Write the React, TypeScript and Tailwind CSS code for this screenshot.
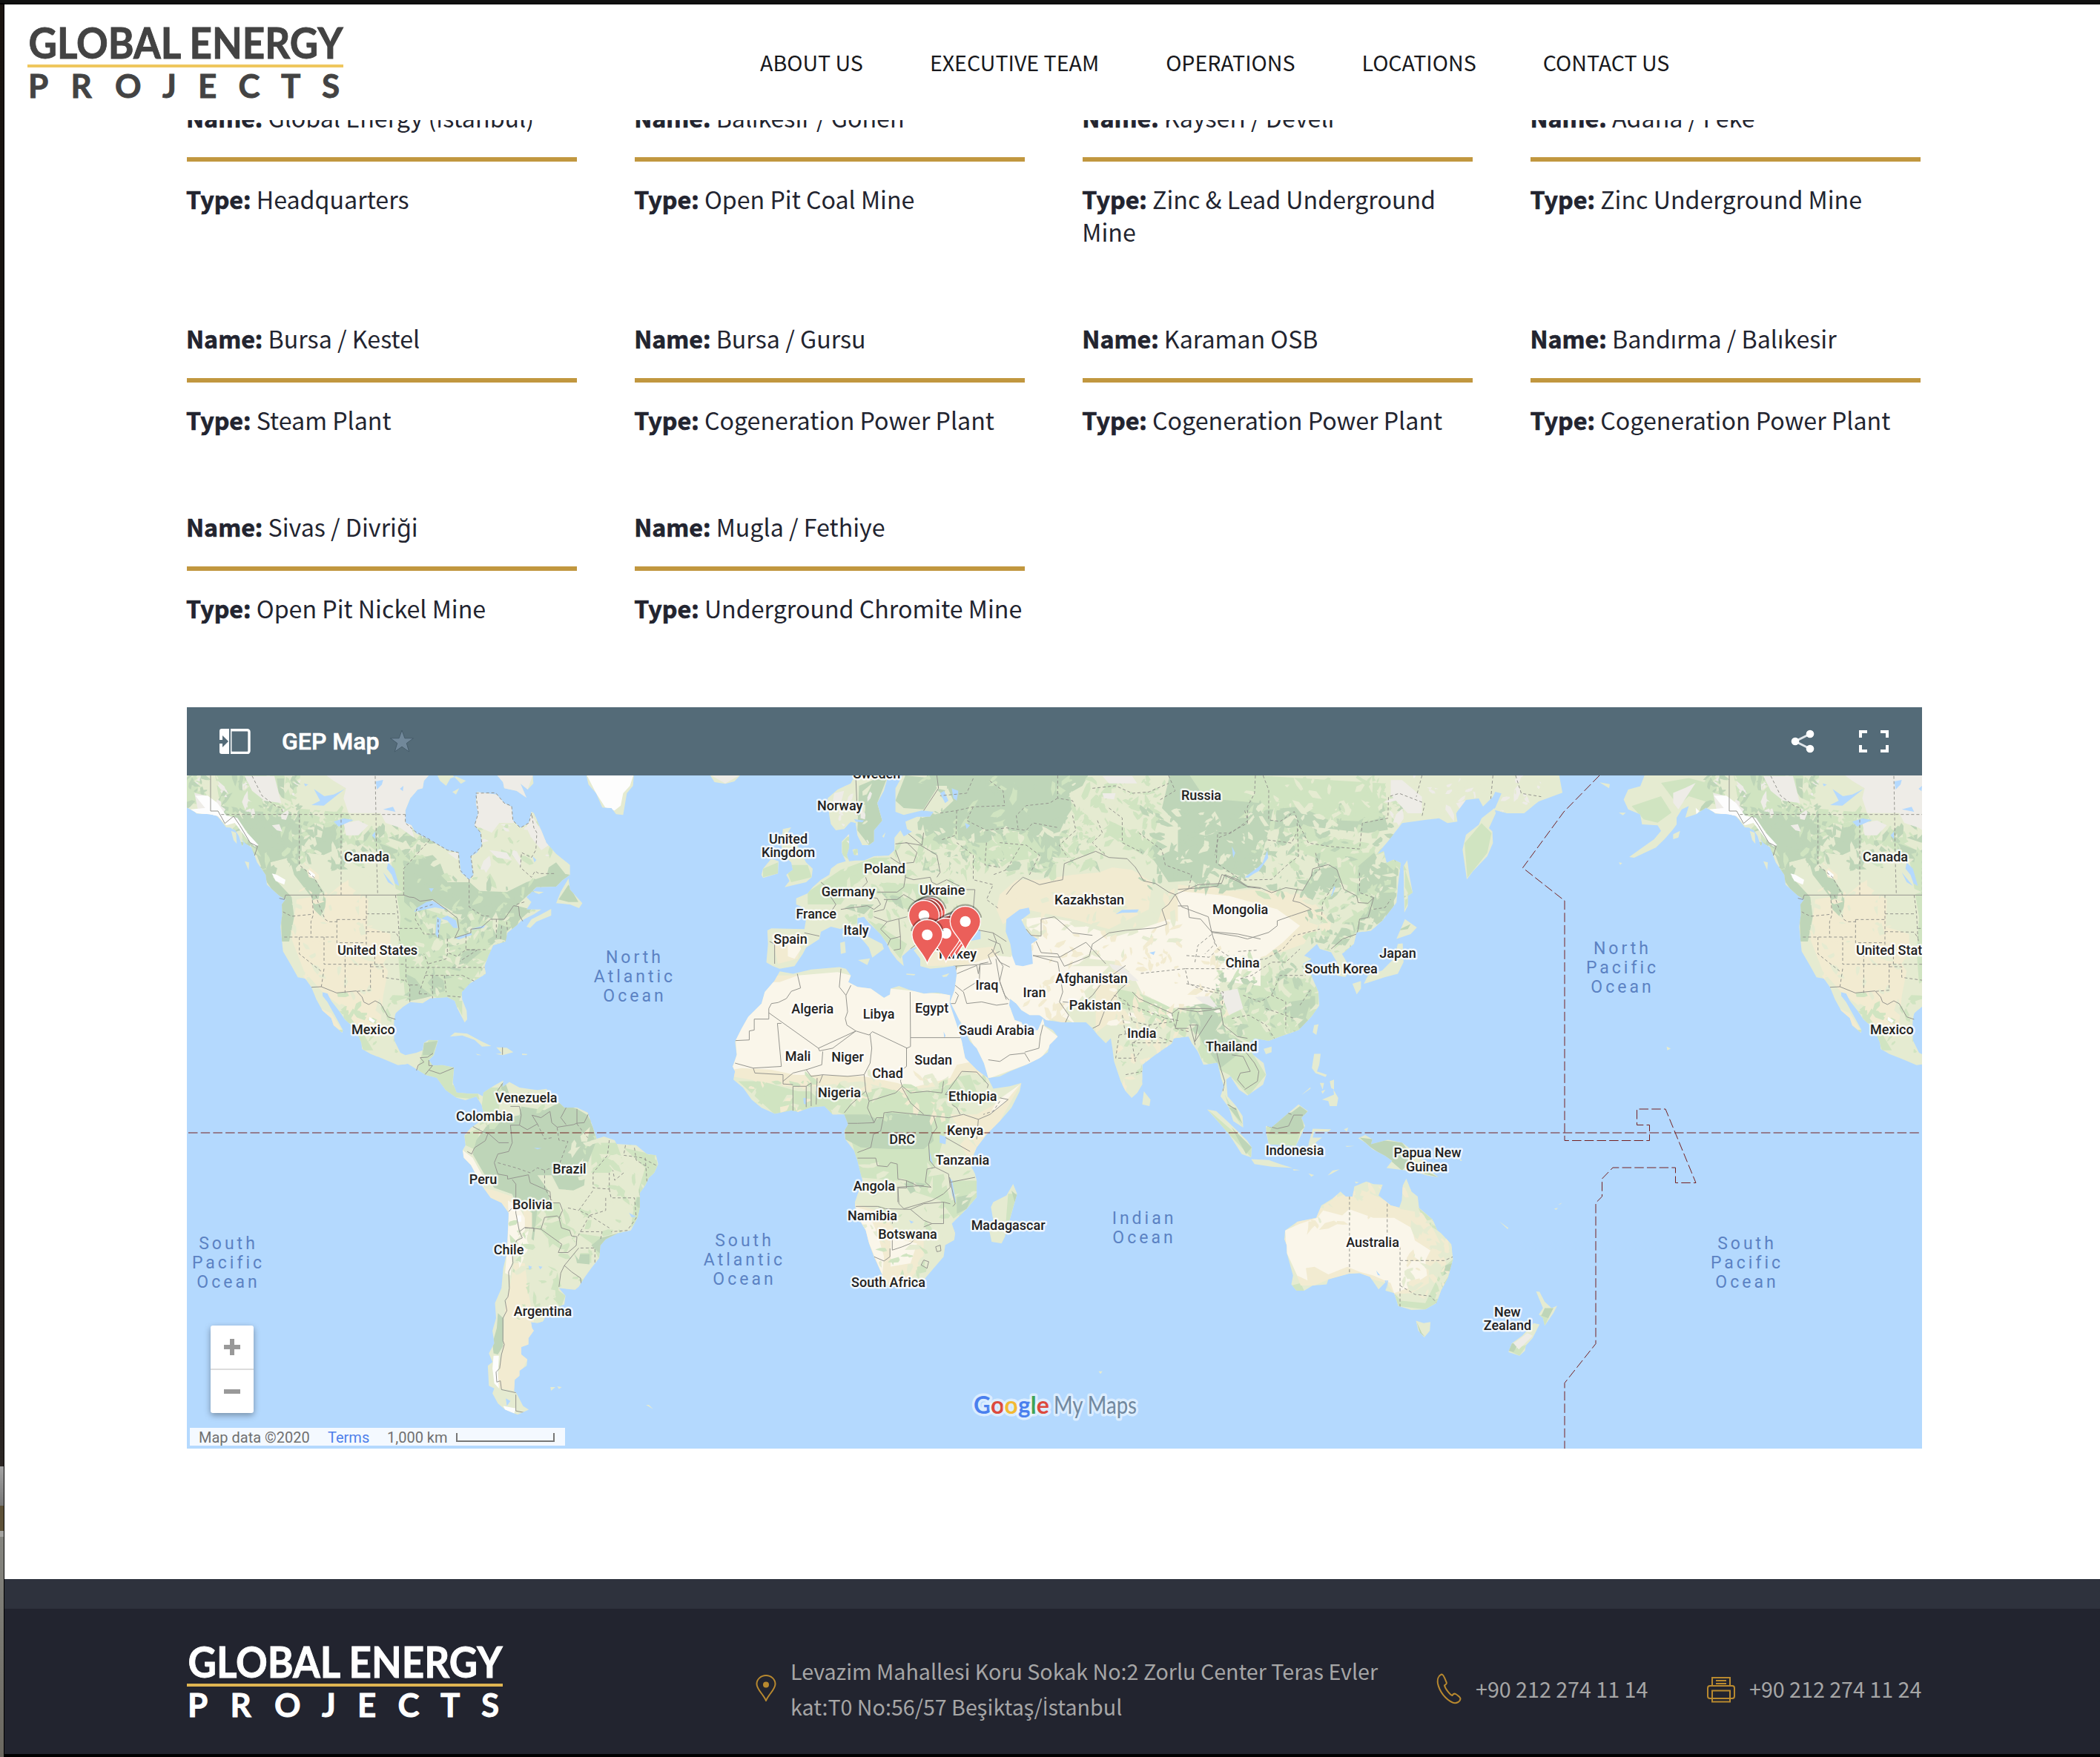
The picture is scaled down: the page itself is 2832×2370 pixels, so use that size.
import React from 'react';

const SANS = "font-['Noto_Sans_CJK_SC','Noto_Sans',sans-serif]";

/* ------------------------------------------------------------------ */
/* Map geometry. Each sheet has its own drawing scale.                 */
/* ------------------------------------------------------------------ */

type Sheet = 'na' | 'alaska' | 'sa' | 'eu' | 'atl' | 'afr' | 'asia' | 'aus';
type Shape = [Sheet, string];

const SHEETS: Record<Sheet, string> = {
  na: 'translate(250 950) scale(0.33333)',
  alaska: 'translate(52 940) scale(0.46685 0.44643)',
  sa: 'translate(240 1440) scale(0.48473 0.33807)',
  eu: 'translate(1000 1040) scale(0.44643 0.33333)',
  atl: 'translate(750 1030) scale(0.41459 0.33333)',
  afr: 'translate(960 1280) scale(0.44643)',
  asia: 'translate(1600 1030) scale(0.3827 0.44643)',
  aus: 'translate(1600 1440) scale(0.46685 0.33807)',
};

const C = {
  water: '#b4d9fe',
  land: '#e5ebd1',
  mid: '#d0e4c1',
  dark: '#bed5b8',
  tan: '#f2ebd1',
  cream: '#faf6ea',
  ice: '#eeece7',
  white: '#fdfdfd',
  line: '#95958f',
};

const AMERICA_LAND: Shape[] = [
  ['na', 'M-50 270L-50 400L6 405L45 442L100 445L130 452L165 498L195 500L215 530L240 560L268 580L290 640L325 690L330 730L380 775L405 790L390 810L392 850L385 900L395 1000L430 1060L455 1105L485 1110L510 1145L530 1195L555 1240L590 1270L600 1300L635 1330L637 1318L600 1250L575 1205L555 1180L555 1165L575 1170L590 1200L625 1245L645 1275L690 1315L712 1370L715 1395L750 1415L800 1435L860 1460L900 1455L940 1480L973 1500L1017 1511L1053 1561L1097 1592L1133 1602L1177 1587L1199 1622L1210 1590L1184 1576L1148 1576L1097 1571L1082 1531L1087 1470L1040 1460L1000 1462L985 1440L1005 1420L1022 1360L985 1358L965 1370L960 1400L935 1410L890 1420L870 1410L845 1360L843 1310L845 1275L850 1250L880 1225L910 1205L960 1210L990 1190L1060 1185L1090 1200L1100 1230L1130 1288L1140 1275L1138 1240L1120 1195L1118 1165L1150 1130L1200 1100L1215 1090L1210 1060L1225 1020L1245 975L1295 960L1303 925L1340 895L1360 875L1410 850L1440 830L1380 830L1400 800L1380 780L1420 740L1500 738L1525 712L1556 690L1556 650L1500 605L1460 560L1440 510L1410 440L1400 435L1390 480L1355 500L1325 470L1320 415L1290 400L1260 365L1180 355L1175 400L1185 440L1170 490L1195 520L1200 570L1180 600L1155 615L1165 690L1148 710L1115 680L1105 600L1060 590L990 550L930 520L915 490L890 480L890 430L910 380L940 345L960 340L965 310L1000 270Z'],
  ['na', 'M1500 805L1518 760L1550 705L1556 750L1606 805L1593 825L1556 810ZM1255 280L1405 280L1408 320L1385 345L1355 320L1380 378L1340 350L1290 340L1285 315ZM1020 288L1030 310L1055 330L1072 300L1095 292L1135 310L1115 322L1080 285ZM1080 355L1108 340L1095 365ZM1380 900L1400 870L1440 850L1480 828L1480 855L1420 880L1395 905ZM1400 755L1450 760L1430 768ZM1070 1345L1090 1328L1140 1333L1200 1365L1238 1383L1200 1385L1170 1358L1120 1340ZM1255 1415L1280 1412L1258 1388L1300 1390L1327 1408L1285 1420ZM1175 1414L1198 1420L1182 1420ZM1362 1414L1384 1415L1380 1420L1362 1419ZM240 635L258 640L256 672ZM185 512L205 520L208 565L195 550ZM212 520L235 560L230 575Z'],
  ['alaska', 'M255 230L240 270L205 280L192 310L205 340L240 355L245 385L290 388L300 405L280 430L240 460L208 484L222 486L285 455L310 430L335 400L345 385L345 365L360 340L380 330L370 365L400 355L430 335L455 350L510 355L560 400L620 400L620 230ZM335 415L355 405L350 425L335 430ZM122 258L152 264L150 276ZM178 350L198 350L190 358ZM178 500L188 502L182 508Z'],
  ['alaska', 'M316 1056L328 1063L318 1068Z'],
];

const AMERICA_ZONES: [string, Shape[]][] = [
  [C.mid, [
    ['na', 'M150 288L400 288L440 420L660 440L680 480L620 540L800 560L880 600L1000 620L1060 720L900 800L880 930L960 1080L870 1130L860 1000L870 860L830 620L700 560L560 560L420 470L280 470L200 420L150 340Z'],
    ['na', 'M880 800L1100 870L1290 880L1290 950L1200 1060L1110 1190L1100 1230L1000 1180L890 1200L880 1080L960 1060L870 920ZM1090 1200L1120 1200L1120 1260ZM640 1230L700 1300L760 1400L720 1400L690 1310L640 1270ZM940 1480L960 1400L985 1358L1022 1360L1005 1420L985 1440L1087 1470L1080 1540L1184 1576L1190 1600L1090 1590Z'],
    ['alaska', 'M300 260L380 245L470 270L510 340L440 320L380 300L350 330ZM510 237L600 237L600 400L550 350L520 300ZM215 330L300 300L330 350L290 380L250 370Z'],
  ]],
  [C.dark, [
    ['na', 'M110 440L150 410L230 430L400 440L460 400L470 520L600 470L625 580L560 610L480 600L470 650L520 700L560 760L572 810L545 860L520 840L510 780L440 690L420 620L345 640L355 700L430 780L440 860L420 960L390 960L385 800L330 720L285 600L240 540L200 460Z'],
    ['na', 'M885 640L1000 610L1030 640L1060 720L1150 720L1190 755L1300 760L1380 720L1500 680L1556 690L1500 738L1420 740L1340 815L1400 830L1300 920L1300 960L1250 970L1240 865L1150 850L1100 850L1000 790L940 850L885 800Z'],
    ['na', 'M880 1180L910 1160L890 1090L930 1110L960 1150L1000 1180L960 1190L910 1200ZM970 1110L1040 1090L1050 1160L1000 1175ZM1070 1070L1130 1010L1160 990L1200 1000L1150 1040L1110 1080ZM370 300L400 300L400 400L380 380ZM965 1370L1020 1362L1000 1420L960 1420ZM780 560L860 590L850 640L790 620ZM1470 660L1500 640L1540 690L1460 700ZM940 500L880 560L820 540Z'],
    ['na', 'M1510 790L1550 730L1590 800L1550 800Z'],
  ]],
  [C.land, [
    ['na', 'M345 640L390 630L430 680L430 740L380 720L350 690ZM470 570L495 580L490 620L470 600ZM540 630L630 610L640 740L570 770L540 690ZM620 640L880 760L850 770L640 770ZM230 300L260 330L240 350L220 330ZM490 470L560 490L550 540L500 530ZM960 880L1010 890L1010 940L970 930ZM1050 950L1110 950L1090 1000L1050 1010Z'],
  ]],
  [C.tan, [
    ['na', 'M450 790L510 780L520 830L560 870L570 780L640 720L740 790L735 900L830 930L830 1000L800 1050L820 1080L800 1180L790 1290L770 1350L700 1310L640 1230L560 1170L480 1080L430 950ZM545 1230L590 1250L637 1325L600 1300ZM480 640L540 690L540 710L500 700ZM630 730L660 710L660 740L640 760Z'],
  ]],
  [C.ice, [
    ['na', 'M560 280L1000 280L960 340L910 380L890 430L915 490L925 540L870 500L810 480L790 440L660 440L640 380L650 340L600 310ZM640 480L700 470L740 490L700 530L650 530ZM1180 355L1260 365L1290 400L1320 415L1330 480L1270 480L1240 520L1195 500L1170 490ZM1395 440L1440 510L1470 570L1440 590L1400 540L1380 500ZM1230 590L1300 600L1320 630L1260 620ZM1255 280L1408 280L1385 345L1380 378L1290 340ZM1060 600L1105 600L1100 630ZM240 290L360 290L388 400L320 390L270 350ZM350 490L380 485L392 515L370 510Z'],
    ['alaska', 'M335 290L370 275L400 260L350 340L335 320ZM450 290L490 300L540 340L520 370L460 340Z'],
  ]],
  [C.white, [
    ['na', 'M40 370L90 370L130 400L165 450L210 460L250 520L296 570L280 575L250 545L200 480L165 490L130 450L45 440L20 425L80 420ZM350 685L370 690L405 710L400 730L365 715ZM745 1265L768 1280L760 1290L742 1278ZM500 670L525 690L520 705L500 690Z'],
    ['alaska', 'M450 340L500 335L520 360L460 352ZM400 335L410 345L402 357Z'],
  ]],
  [C.water, [
    ['na', 'M935 825L975 800L1000 795L1062 832L1010 822L960 832L925 840ZM1018 860L1035 870L1022 945L1012 930ZM1035 868L1060 855L1095 875L1102 905L1085 905L1060 875ZM1090 945L1155 923L1160 933L1105 952ZM1158 908L1215 893L1205 905L1165 912ZM820 640L845 665L865 735L848 725L835 690L815 665ZM800 680L845 735L820 720ZM520 343L562 372L600 365L645 343L560 410L510 408L545 390ZM770 312L800 306L795 325L775 345ZM755 530L768 515L768 545ZM600 475L640 462L680 468L620 495ZM1405 615L1420 630L1412 640ZM868 342L882 330L880 352ZM985 745L1005 745L995 760ZM480 320L497 325L485 332ZM800 425L840 415L850 435Z'],
  ]],
];

const AMERICA_SOLID: Shape[] = [
  ['na', 'M380 785L400 790L405 772H885L905 780L925 782L950 797L1000 790L1062 835L1100 865L1107 910L1090 945L1155 925V910L1195 905L1235 870H1290L1328 815L1348 818L1352 855L1365 878'],
  ['na', 'M510 1145L550 1143L612 1168L692 1160L715 1185L722 1205L742 1215L768 1200L790 1212L820 1265L850 1275'],
  ['na', 'M102 288V432H132L160 482L195 453L220 490L262 560L292 575L280 612'],
  ['na', 'M935 1482L942 1460L965 1448L950 1430L980 1428L1002 1412M985 1440V1462L1000 1462L970 1498M985 1480L1030 1495L1085 1472M1283 1388V1418'],
];

const AMERICA_DASH: Shape[] = [
  ['na', 'M145 446H890M461 446V650L520 700L560 772M630 446V772M768 290L771 446L773 600L778 772M883 772V665L990 548M270 290L290 330L310 370L370 415L388 418L395 446M732 772V985M732 848H858M850 772L860 850L865 945M613 871H732M613 871V965H732M732 920L850 922L865 945L870 970M400 942H613M461 942V1010L555 1085M561 942V1052H892M561 1070L550 1143M646 1010V1168M766 1020V1052M749 1052V1157L690 1162M749 1062H800V1105L892 1118M892 1030V1120L908 1140V1205M908 1136H940M512 772L518 850L508 880V942M395 840L430 858L512 850M527 772L540 810L565 870L580 880H613M865 907H950M1000 810L935 830L930 870L965 930H1018M892 1065H1210M970 1097H1120M1000 1097V1190M1048 1097L1055 1165M945 1170L970 1097L985 1060L965 1010M1135 935V993H1222M1060 948V1005L1100 1020L1135 993M985 1050L1055 1030L1063 1000M1148 710V820L1200 855L1235 858M945 1172H985M1060 1180L1118 1185M1120 1097L1168 1120M1135 993L1180 995L1110 1040M1258 870V950M1275 950L1280 890M1300 880L1303 915M1340 810L1380 797M1022 870L1025 945M990 548L930 515L890 480V446M1000 555L1060 590L1105 600L1110 670L1148 710L1165 690L1155 615L1200 575L1195 520L1170 490L1185 440L1175 360L1255 358L1290 400L1320 412L1325 470L1355 500L1390 480L1402 435M1402 450L1410 500L1422 520L1418 590L1400 620L1360 600L1355 660L1400 700L1415 675L1430 685H1500'],
];

const LAND: Shape[] = [
  ['sa', 'M845 150L850 100L880 72L905 52L903 78L922 58L950 80L1000 90L1025 85L1060 140L1075 160L1110 160L1140 180L1155 240L1165 285L1185 275L1215 290L1220 305L1275 310L1305 345L1330 350L1336 385L1325 420L1310 440L1300 470L1285 500L1285 560L1278 600L1260 650L1225 660L1190 685L1175 710L1172 760L1150 800L1130 840L1115 875L1105 887L1060 880L1078 910L1075 945L1050 960L1020 1000L1015 1012L1000 1020L982 1015L985 1040L990 1050L975 1080L975 1105L955 1115L955 1145L972 1165L970 1190L950 1210L950 1230L937 1245L935 1290L942 1300L960 1350L976 1365L945 1385L910 1365L890 1340L875 1300L880 1280L865 1270L862 1190L875 1175L865 1140L880 1100L875 1050L885 1000L882 940L900 880L905 800L915 740L918 640L920 580L900 540L870 520L850 480L830 430L815 390L795 360L792 330L800 310L797 270L815 240L835 220L850 180ZM1036 1275L1050 1275L1038 1290ZM1055 1272L1068 1275L1060 1282ZM1302 1346L1310 1346L1322 1363Z'],
  ['atl', 'M97 40L253 40L250 90L230 120L218 208L195 205L180 180L150 178L130 120L105 85ZM500 45L515 75L550 82L580 72L600 45Z'],
  ['afr', 'M205 68L245 75L300 62L385 55L405 60L420 80L412 100L440 115L480 120L520 148L538 138L540 120L565 112L600 125L640 135L680 132L720 140L718 165L740 230L755 280L765 330L800 365L835 392L850 422L900 415L935 405L930 430L905 480L870 520L830 560L800 600L780 650L795 680L800 700L800 750L770 785L740 815L725 830L735 860L732 880L705 895L700 930L670 965L640 1000L600 1015L540 1020L515 1010L515 985L490 930L475 890L465 850L435 800L432 765L455 700L440 640L430 610L403 575L400 550L412 530L400 500L365 500L340 475L300 478L260 492L240 488L190 498L150 480L120 455L95 420L65 395L70 370L63 355L75 320L70 280L90 240L110 205L150 165L160 130L190 95Z'],
  ['afr', 'M910 710L922 740L905 800L885 870L875 890L845 885L838 850L850 820L843 780L850 765L890 745ZM1305 430L1325 455L1322 475L1300 470ZM1168 1276H1180L1174 1284Z'],
  ['afr', 'M735 50L740 75L733 125L720 160L735 190L755 230L780 280L800 300L822 345L835 390L870 385L900 370L950 350L990 330L1015 312L1020 290L1045 265L1030 245L1005 232L1000 210L985 245L950 250L935 222L915 215L898 170L900 150L920 165L935 185L960 200L990 200L1010 215L1060 222L1130 222L1150 240L1165 260L1190 285L1205 270L1210 300L1215 340L1235 400L1250 430L1268 450L1285 435L1300 410L1300 350L1340 320L1390 285L1395 270L1440 265L1450 285L1475 320L1490 350L1510 345L1510 -100L735 -100Z'],
  ['eu', 'M345 10L330 50L290 75L260 110L265 180L270 215L285 240L310 235L330 205L345 210L350 260L365 300L385 300L400 285L400 240L425 200L410 130L430 80L445 10Z'],
  ['eu', 'M490 10L465 70L465 165L490 178L545 160L580 165L570 185L530 185L495 205L500 235L515 245L490 265L480 240L462 270L462 320L445 342L400 345L370 362L345 362L325 365L318 340L325 310L325 255L303 285L303 330L315 365L290 375L270 395L265 420L240 440L215 470L200 495L165 515L165 540L190 555L195 600L190 640L90 637L78 645L80 700L75 775L95 790L115 800L160 790L185 740L195 715L235 680L240 650L270 630L300 640L320 620L340 650L370 690L385 715L395 755L410 740L430 720L425 700L375 665L350 620L350 595L370 590L385 615L420 660L440 700L450 730L470 765L490 790L485 750L510 720L535 710L520 725L540 760L540 790L570 800L610 795L650 787H1568V10Z'],
  ['eu', 'M125 235L150 228L140 250L160 270L175 320L195 370L215 395L212 430L195 450L130 470L145 445L135 420L155 400L150 370L125 340L120 300ZM65 395L90 355L112 365L110 415L65 433L60 420ZM298 695L312 690L315 735L300 740ZM304 660L311 655L308 680ZM352 765L388 758L380 785ZM498 820L525 822L522 827L498 824ZM605 828L628 818L620 832L610 834ZM335 318L350 315L352 340L340 340ZM425 265L435 248L430 270Z'],
  ['asia', 'M-30 20L-30 790L20 830L60 910L110 903L122 950L132 975L120 1005L150 1040L165 1080L200 1100L198 1065L175 1035L145 1005L140 955L155 945L185 985L215 1003L270 970L281 940L272 905L235 880L215 850L240 830L290 838L330 825L395 805L440 765L468 730L465 690L445 650L430 620L410 605L440 590L415 580L460 545L470 560L510 570L530 600L530 640L560 645L575 620L565 600L548 575L590 545L600 510L650 505L690 475L740 420L745 370L755 300L730 290L705 300L695 265L670 275L710 235L760 180L840 170L890 165L920 180L955 175L950 150L985 110L1030 105L1045 130L1080 100L1088 85L1110 90L1085 140L1130 150L1190 150L1240 115L1325 88L1310 20Z'],
  ['asia', 'M1085 135L1040 165L1030 185L985 215L973 260L988 350L1010 325L1060 280L1080 240L1078 205L1066 195L1090 150ZM765 310L778 292L786 340L797 390L780 400L780 430L768 450L767 400ZM770 470L812 495L790 515L740 530L755 500ZM745 545L762 543L765 600L745 635L700 645L640 662L625 665L640 640L690 625L730 590ZM585 665L615 657L615 680L600 697ZM450 790L465 788L458 820L445 812ZM272 862L300 855L300 872L280 878ZM450 877L473 877L468 910L460 930L495 940L490 947L455 935L442 920ZM470 965L485 965L480 985ZM475 990L490 985L480 998ZM505 960L520 955L520 985L510 980ZM478 1015L520 1000L518 985L535 1010L530 1035L505 1035L500 1020ZM405 1002L437 978L437 982Z'],
  ['asia', 'M73 1045L105 1050L150 1085L215 1140L230 1160L228 1190L195 1180L150 1120L110 1080ZM228 1195L290 1198L330 1210L375 1222L300 1218L240 1210ZM280 1095L300 1100L340 1070L395 1030L428 1050L405 1070L418 1095L400 1130L385 1155L290 1150L282 1120ZM430 1150L445 1103L510 1105L500 1112L450 1112L445 1130L478 1130L455 1145L470 1170L432 1165ZM430 1238L450 1243L440 1248ZM497 1245L515 1230L540 1226L510 1240ZM555 1105L570 1100L565 1112ZM560 1155L592 1155L565 1158ZM593 1263L608 1265L598 1269ZM605 1132L630 1122L655 1135L650 1150L710 1137L760 1145L830 1190L850 1225L888 1250L850 1245L800 1232L705 1222L725 1200L700 1185L655 1165L630 1145ZM960 1190L972 1200L965 1200ZM375 1225L400 1228L378 1230Z'],
  ['aus', 'M285 650L320 615L375 600L390 550L425 520L445 495L460 515L480 515L485 475L510 460L520 455L540 465L567 467L555 510L590 550L615 558L622 530L625 470L635 443L650 495L668 515L672 560L710 605L725 650L735 660L765 705L770 765L755 840L735 890L722 940L690 965L650 967L612 952L600 900L575 890L580 850L555 885L530 835L500 820L470 822L410 845L405 865L365 870L340 890L318 890L303 865L308 830L290 740L290 710L283 685ZM663 1010L685 1020L705 1015L703 1050L687 1077L670 1050ZM1010 893L1020 895L1035 935L1055 960L1071 950L1060 980L1050 1000L1035 1030L1030 1000L1018 985L1030 960ZM1003 1020L1020 1025L1000 1080L980 1110L978 1130L962 1150L930 1135L940 1100L970 1070ZM903 613L930 640L928 645ZM1062 563L1073 560L1068 568ZM1074 546L1085 540L1080 546Z'],
];

const ZONES: [string, Shape[]][] = [
  [C.mid, [
    ['sa', 'M850 80L900 80L890 200L840 230ZM1150 300L1220 300L1240 380L1200 420L1150 420ZM1240 320L1330 350L1335 400L1300 470L1285 600L1260 640L1270 540L1300 400ZM1030 540L1060 540L1070 620L1110 650L1080 740L1040 700L1010 650L960 620L985 560ZM1100 740L1150 740L1150 780L1110 770ZM1050 880L1078 910L1065 960L1050 930ZM1110 660L1200 680L1170 760L1150 700ZM797 270L840 240L830 330L800 310Z'],
    ['afr', 'M80 400L150 400L260 430L330 430L450 430L560 410L640 430L700 420L720 390L780 380L800 430L730 480L710 540L680 640L640 710L560 700L440 690L430 610L400 500L340 478L190 500ZM580 700L700 680L720 760L800 750L770 785L730 815L690 760L600 730ZM720 700L800 700L800 750L740 780ZM895 740L922 740L885 870L890 800ZM620 130L690 130L690 145L640 145Z'],
    ['eu', 'M130 380L200 380L212 430L150 450ZM65 395L110 370L110 415L65 430ZM303 290L325 260L325 360L305 340ZM200 490L300 400L400 350L450 350L340 460L300 540L200 540ZM560 260L760 260L900 230L1000 350L900 350L740 380L650 320L560 320ZM420 450L560 460L600 520L500 560L440 520ZM1110 200L1190 250L1300 330L1340 430L1200 330L1110 260ZM1130 880L1200 900L1360 990L1340 1080L1250 1000L1150 960ZM380 600L430 640L500 700L480 760L430 680Z'],
    ['asia', 'M-30 36L250 36L700 60L710 165L640 180L480 170L380 140L300 170L-30 130ZM380 200L640 240L700 270L740 300L740 400L680 480L600 510L520 560L550 480L640 430L560 390L500 300L380 260ZM200 680L260 640L420 650L465 690L465 735L440 765L395 805L290 838L215 840L170 820L130 780ZM40 800L215 850L280 940L220 1003L150 940L60 900ZM135 1000L200 1100L150 1040ZM75 1045L230 1160L228 1190L150 1120ZM980 240L1040 180L1075 210L1060 270L990 345ZM280 1100L430 1050L385 1155L290 1150ZM0 620L140 750L120 850L0 800ZM770 320L797 390L770 440Z'],
    ['aus', 'M600 900L620 930L690 940L740 800L770 765L755 840L722 940L690 965L612 952ZM303 870L330 860L340 890L318 890ZM670 560L710 605L725 650L690 620ZM932 1130L985 1105L962 1150ZM1020 990L1060 960L1035 1030Z'],
  ]],
  [C.dark, [
    ['sa', 'M860 230L900 205L950 190L955 155L1020 170L1060 140L1110 165L1140 190L1155 240L1165 290L1150 345L1135 400L1130 470L1100 490L1060 485L1040 430L1000 430L1030 490L1035 540L940 540L930 505L880 480L850 420L820 345L830 290ZM985 560L1000 560L990 690L975 680ZM890 980L905 1000L905 1110L890 1145L878 1140L875 1100L887 1040ZM1175 680L1225 660L1180 750L1150 710ZM1285 480L1285 560L1270 560ZM1105 745L1145 745L1145 785L1110 780Z'],
    ['afr', 'M400 500L470 500L500 515L530 495L600 500L660 500L670 580L640 605L540 605L450 600L403 575ZM575 700L650 710L600 740ZM740 750L790 740L770 785L740 800ZM905 730L922 745L915 765ZM1505 170L1530 180L1530 350L1480 280L1460 220ZM1440 215L1500 195L1460 260Z'],
    ['eu', 'M560 10L1050 10L1030 60L990 90L1000 150L980 190L960 250L965 330L945 380L925 415L915 330L870 250L800 240L740 290L650 290L600 300L555 260L545 190L600 170L640 120L620 60L560 60ZM355 60L445 10L410 130L425 200L400 285L385 300L350 240ZM495 18L580 30L590 70L550 155L490 150L465 120ZM1295 10L1350 10L1400 110L1568 130L1568 390L1530 420L1480 400L1400 330L1390 440L1290 450L1230 330L1250 280L1320 330L1330 230L1270 150ZM330 540L400 540L370 580L310 555ZM420 490L480 510L490 560L440 520ZM900 360L935 280L960 330L925 430ZM1380 470L1500 440L1540 470L1440 490ZM1360 940L1430 930L1450 1060L1400 1100L1350 990Z'],
    ['asia', 'M-30 120L280 140L400 130L500 170L640 175L700 160L710 200L640 210L430 190L290 200L265 280L200 320L190 340L80 310L-30 270ZM450 320L530 310L550 380L600 400L605 310L660 270L700 300L740 330L740 400L690 475L640 505L600 500L560 550L510 545L560 480L600 480L645 430L655 405L600 410L545 385L470 370L440 420L410 385ZM80 745L115 745L140 810L215 850L180 880L120 920L85 860L60 800ZM300 1100L400 1035L425 1050L405 1070L415 1100L390 1120L290 1120ZM610 1130L760 1145L800 1190L760 1230L720 1200L650 1160ZM820 1220L888 1250L840 1240ZM360 720L440 710L420 770L370 780ZM270 370L320 360L320 385L270 390ZM150 1040L175 1040L198 1090ZM160 1100L230 1160L210 1180ZM740 505L790 485L780 500Z'],
    ['aus', 'M748 790L768 780L755 840L735 880ZM1035 960L1060 960L1045 1000L1025 990ZM940 1100L960 1100L945 1135L930 1130ZM665 1015L680 1060L690 1075L675 1060ZM240 200L300 180L350 175L300 250L240 240Z'],
  ]],
  [C.tan, [
    ['sa', 'M850 480L880 490L930 515L920 580L900 540L870 520ZM925 860L935 780L965 780L975 900L990 1000L990 1050L975 1105L955 1130L972 1165L950 1230L937 1290L895 1280L890 1240L905 1110L910 960ZM960 560L985 580L985 640L965 640Z'],
    ['afr', 'M60 350L330 360L460 380L720 370L760 370L720 410L560 430L450 400L260 420L60 385ZM190 80L260 80L240 130L180 160ZM935 405L880 455L800 500L720 500L760 560L800 600L870 520ZM430 770L530 800L560 870L640 860L640 950L580 1020L515 1010ZM700 290L780 330L840 395L780 370L720 370ZM780 560L800 600L780 640L750 590Z'],
    ['eu', 'M780 500L830 440L900 440L1000 420L1080 410L1120 390L1180 400L1240 450L1230 560L1110 640L1000 600L860 560L790 620L770 560ZM1270 560L1310 500L1400 460L1568 520L1568 640L1400 640L1250 640ZM90 660L185 680L170 760L110 780ZM560 740L760 710L790 780L560 790ZM760 760L980 800L980 1030L900 980L800 850ZM1070 850L1140 800L1130 1000L1070 1060Z'],
    ['asia', 'M-30 365L120 385L250 380L380 390L440 410L500 470L430 540L300 580L200 600L-30 690ZM470 470L510 480L500 530L480 520Z'],
    ['aus', 'M395 550L430 520L500 485L560 520L620 565L680 580L715 650L740 720L730 760L700 800L700 860L650 900L600 905L580 860L470 822L410 845L370 870L330 870L300 760L283 685L320 615Z'],
  ]],
  [C.cream, [
    ['sa', 'M792 330L820 360L850 440L850 480L830 430L815 390L795 360ZM918 530L950 560L965 600L965 650L935 700L925 830L910 820L915 740L920 600ZM940 700L975 650L975 720L950 800Z'],
    ['afr', 'M60 365L75 320L60 100L205 100L260 80L380 70L420 80L440 110L740 140L760 300L790 340L740 350L720 390L600 420L560 405L460 385L330 382L250 380L180 365L90 360ZM735 60L860 20L960 30L960 60L1050 110L1040 200L1000 230L1045 265L990 335L835 392L790 290L720 160ZM930 410L880 470L840 500L860 460ZM435 780L470 790L500 860L520 930L515 985L475 890ZM540 870L620 890L600 950L540 960Z'],
    ['eu', 'M845 600L910 590L1000 610L1090 650L1140 690L1050 740L980 790L880 780L870 700L895 680ZM1080 690L1180 650L1290 600L1420 640L1568 620L1568 870L1450 850L1400 940L1300 960L1210 900L1180 820L1130 770L1050 760ZM1320 510L1440 560L1500 600L1400 610L1320 570ZM880 760L970 790L1110 790L1060 860L980 960L830 850ZM140 700L170 690L180 720L160 760L140 750ZM1310 500L1568 540L1568 580L1400 540Z'],
    ['asia', 'M-30 385L150 400L320 440L400 490L340 540L280 580L200 600L100 640L-30 660ZM-30 670L20 680L10 710L-30 700Z'],
    ['aus', 'M285 650L325 625L378 600L395 570L450 590L470 565L540 600L600 600L650 640L660 690L705 730L690 770L695 830L640 880L600 900L590 860L540 830L500 815L465 795L410 825L370 795L345 800L350 850L320 830L290 740Z'],
  ]],
  [C.ice, [
    ['eu', 'M1090 20L1180 20L1195 50L1110 50ZM1090 90L1130 90L1125 115L1095 110ZM280 90L310 80L300 130L275 130ZM1110 780L1150 790L1200 850L1180 850L1120 800ZM1380 910L1430 940L1430 960L1390 935Z'],
    ['asia', 'M720 50L760 50L830 100L830 150L780 150L720 95ZM30 705L80 703L110 735L60 725ZM950 120L990 110L965 140ZM120 690L180 680L200 740L150 760Z'],
    ['atl', 'M500 45H600L550 80Z'],
    ['aus', 'M945 1100L985 1060L1000 1070L960 1125Z'],
  ]],
  [C.white, [
    ['sa', 'M878 1150L893 1150L890 1220L893 1280L880 1260L875 1200ZM905 1350L940 1360L935 1382L910 1365ZM945 590L955 590L955 615L945 615Z'],
    ['atl', 'M97 40L253 40L240 90L218 120L210 170L190 190L160 178L130 120Z'],
  ]],
  [C.water, [
    ['eu', 'M570 650L595 600L640 590L700 610L722 650L722 680L640 700L590 690ZM800 600L840 560L868 553L872 575L845 602L865 655L895 682L875 700L880 780L850 790L828 785L818 750L812 700L798 650ZM1130 580L1150 562L1200 560L1195 572L1150 574ZM600 90L612 80L625 120L615 130ZM635 70L655 80L650 120L640 110ZM1520 430L1560 390L1568 395L1530 432ZM340 195L370 200L365 208L345 205ZM1232 735L1250 730L1245 745ZM675 210L690 220L680 235Z'],
    ['asia', 'M268 300L285 262L288 285L255 325L205 347L240 325ZM510 400L520 370L525 375L512 402ZM160 250L172 270L165 285ZM150 955L158 945L160 960Z'],
    ['afr', 'M688 562L708 568L706 590L688 586ZM718 690L726 700L738 770L726 745ZM655 600L668 650L660 640ZM700 250L706 262L702 270ZM276 450L284 450V470L278 468ZM596 820L610 825L602 830Z'],
    ['sa', 'M975 790L985 795L978 808ZM1003 792L1014 795L1008 805ZM990 320L1012 322L1000 326ZM1255 580L1275 595L1262 598ZM912 1320L925 1330L915 1350Z'],
    ['aus', 'M548 810L560 830L553 828ZM573 850L583 850L578 885Z'],
  ]],
];

const SOLID: Shape[] = [
  ['sa', 'M690 25L700 5M740 75L768 78M772 102L778 122M838 115L832 135M905 60L890 90L890 120M820 235L850 258L863 262L893 300L920 300M863 262L855 292L825 320L817 345M817 345L805 335M925 155H950L955 190L950 230L925 230L930 300L920 335L890 345L880 380L890 425L917 432V445L975 428L980 460L1035 495L1038 540L1062 540L1070 570L1060 600L1067 640L1090 650L1095 672L1110 675L1108 710L1085 738H1058L1068 705L1010 645L965 638L950 655L940 580L940 500L940 465L930 447M1010 645L1020 598L1055 592L1065 605M965 640L990 640L990 655M950 655L958 680L942 690L930 740L932 780L920 815L922 880L918 915L910 930L915 970L904 1000V1090L908 1105L900 1145L895 1200L885 1215L887 1255L897 1250L900 1285L942 1298M940 1305V1370L968 1378M950 230L972 248L1000 225L985 190L1010 200L1035 175L1040 220L1055 238L1100 228L1110 222L1130 220L1142 185M1080 160L1065 200L1080 228M1110 165V225M1115 720L1075 790L1065 820L1060 875M1075 790L1095 815L1120 840L1122 865M920 575L930 560'],
  ['afr', 'M258 75L268 118L240 128L225 150L200 162L180 165L172 180V212H128V245L113 248V275L70 277M172 193L322 300L435 248L408 230L403 210L410 190L405 140L385 115L390 60M405 140L420 110M210 225H198L210 355L125 360L70 345M322 300L325 308L365 300L435 248L475 260L485 250L590 300M478 258L483 300L478 345L460 380L410 385L335 380L325 405M599 130L600 268M600 268V295L588 300V355L575 365L570 400M600 268H690L755 268M335 310L332 350L285 365L300 385L335 380M125 360L130 375L215 380L215 408L245 410M285 365L245 375L215 400M245 415V490M285 415V478M300 405V475M318 390L315 470M245 415H285L300 405M460 380L465 430L420 470L400 495M465 430L475 460L555 435L575 415L570 400M575 415L600 435L650 430L695 435L700 400M475 460L470 480L490 525L497 510H518L520 495L545 492L620 500L670 505M410 527H440L490 525M518 510L510 550L488 560L480 600L440 615M640 500L600 465L575 420M670 505L680 540L665 560L655 590L658 640L675 660L650 665L645 705L662 720L620 715L588 700V722H562L565 770L580 785L665 760L700 740L720 720L715 680L675 660M440 632H495L500 655L530 658L540 645L560 650L562 695L588 700M435 778L500 778L525 785L600 787L640 820L665 830M562 722V765M600 787L640 770L700 765L700 830L665 830L640 840M548 800L545 830M545 865V910L575 900L600 890L640 850M538 905V930L520 943L490 930M720 705L795 690M718 690L735 770L728 778M706 570L780 612M670 505L715 510L760 500L805 515L840 500L895 455L870 450M735 440L705 440L755 370L800 372L835 410L832 420M750 500L740 480L725 470M805 515L800 575M560 720L640 715M700 765L720 770M676 900L690 895L692 912L680 915ZM640 940L655 945L650 965L632 955Z'],
  ['afr', 'M740 75L800 50L805 75L810 45L835 40M735 110L760 130L770 165L815 160L860 170L895 165M810 50L808 95L760 125M858 30L870 100L885 140L898 155M845 0L870 40L900 55M720 165L735 165L745 140L735 130M835 335L870 340L900 320L945 315L960 340M945 312L988 300L992 265L1000 230M970 20L1045 40L1060 130L1050 160L1078 200L1068 222M970 20L1050 25L1130 -20L1190 45M1060 160L1120 165L1150 140L1180 100L1250 50M1150 240L1170 230L1185 190L1210 150L1235 120L1260 100M1270 130L1290 150L1390 195L1410 180L1510 180M1410 190L1400 240L1440 240M1445 230L1460 290'],
  ['eu', 'M85 690L100 700V780M190 655L235 668M300 560L325 555L380 545L400 560L420 540L410 515L360 505L350 490L380 450L375 430M240 450L265 480L270 510L285 540L270 570L280 600M350 180L345 20M590 18L595 70L548 165M465 295L500 290L530 330L520 370L480 375L465 320M450 350L495 390L495 430L520 440L570 430L575 450L590 460L620 440L680 480L705 480L700 560L680 580M495 430L490 470L470 490L410 490M430 520L470 520L490 500L540 540M440 520L430 560L400 570M500 590L440 610L400 590M440 610L420 640L450 680L480 670L475 600M450 680L440 710M480 670L480 720L460 725M510 720L540 690M700 640L760 655L800 690M745 680L780 700L790 740M760 655L770 690L760 730L745 745L755 780L640 790M800 500L820 465L850 430L885 450L900 460L950 445L970 440L975 375L1070 325L1110 350L1165 355L1190 390L1215 445L1250 455L1290 490L1310 500L1290 540L1270 560L1285 620L1250 635L1160 645L1110 655L1060 700L1050 750L975 790L955 740L905 735L890 690M860 640L875 665L905 668V600L945 590L980 630L1000 655L1060 665M1310 500L1380 460L1450 455L1460 420L1500 440L1530 470L1568 475M1310 500L1330 550L1410 590L1420 650L1500 660L1568 680M640 795L650 790L640 850M780 730L765 740L790 790L780 850L790 890L800 925M500 250L545 300L550 250M495 290L540 300L590 340L600 410L590 430'],
  ['asia', 'M-30 380L60 375L110 370L125 335L180 355L210 370L260 375L300 390L350 375L410 383L440 340L445 318L500 305L530 320L555 380L600 400L605 420L640 422L660 405L640 465L610 470L605 500L600 515L550 530L510 560M-30 430L5 430L10 465L50 470L90 510L180 522L215 530L290 510L320 490V475L370 460L440 440L400 420L375 415L390 380M-30 740L40 750L120 740M120 740L130 790L180 825L215 830M10 790L40 790L30 840L90 760M180 840L240 905L255 930L250 960L205 985M160 880L200 885L225 930L190 935L180 955L205 980M100 850L120 920L135 960L128 990M145 1030L175 1045M285 1095L320 1103L360 1095L378 1062L410 1062M355 1055L370 1060'],
];

const DASH: Shape[] = [
  ['eu', 'M750 40L790 80L795 140L700 145L650 160L600 170M650 160L648 260L600 280M700 145L680 200L740 240L800 230L860 240L880 210L960 230M955 18L955 110L1000 120L1010 150M955 110L930 130L860 140L830 180L835 230M1000 180L1010 240L960 300L985 350M740 290L735 380L780 390M780 290L860 300L900 340L870 420M650 290L700 340L700 440L760 460L740 520L780 560M1075 200L1090 250L1060 290L1100 340M1110 150L1150 190L1150 290L1210 330M1200 250L1270 320L1280 380L1360 420L1350 480M1290 18L1310 80L1260 120M1520 160L1530 200L1480 250L1440 270L1430 340M1420 650L1430 700L1400 740M1568 780L1490 800L1340 800L1350 860L1400 890L1450 900M1340 800L1200 820M1500 730L1560 725M1150 940L1200 960L1280 1000L1240 1060L1180 1100L1190 1180M1280 1000L1320 1010M1180 1100L1290 1100M840 310L800 400L760 420M700 30L680 90L600 100M1060 70L1130 60L1180 90L1230 85L1290 50'],
  ['asia', 'M243 36L240 90L215 130L215 180L150 210L110 210L105 300L190 350M270 36L290 80L290 170L330 175L380 145L400 190L370 240L280 230M400 190L430 240L500 250L610 258L620 180L710 165L712 100L750 90L840 120L830 160M830 36L810 100M1080 36L1072 110M1160 36L1180 90L1250 100M530 350L480 420L475 480M610 330V390L660 405M660 440L700 435L720 410M30 600L40 550L90 515M90 515L110 560L180 600L280 590L340 560L380 520L470 500M0 580L80 585L100 570M0 665L60 675L130 690L125 740M190 650L230 640L300 600L350 600L400 560M200 700L260 720L300 700L350 720V800M300 700L330 640L420 640M160 770L220 760L280 790L310 830M400 730L440 680M280 740L380 770M455 270L470 320L440 340M390 180L395 280L350 310L300 350L200 352'],
  ['sa', 'M1000 225L1020 285L1040 280M1055 240L1060 290L1085 295L1060 390L1020 410V480L1040 530M1110 225L1140 280M890 380L940 400L980 420L1000 400L1020 410M1200 290L1195 350L1155 420L1155 480L1200 485V420M1245 310L1240 350L1290 360L1330 390M1240 420L1215 450L1210 410M1270 320L1275 370L1310 400M1300 360L1305 460M1200 485L1205 520L1270 520L1275 600L1250 650L1205 655M1190 520L1190 570L1145 590L1115 570L1155 490M1085 560L1115 570M1145 590L1200 640M1145 590L1110 680M1120 655L1180 655L1175 690M1120 720L1160 720L1160 780'],
  ['afr', 'M1215 140L1255 160L1270 220L1320 230L1390 220M1230 260L1300 250L1390 280M1230 260L1220 330L1280 330L1300 300M1250 380L1300 370M1240 200L1250 260M1320 230L1330 280M1390 195L1400 240L1440 250M870 460L850 490L820 500'],
  ['aus', 'M471 515V822M580 543V680M617 715V955M617 770H720L745 770L770 755M617 870L660 905L705 912L725 942'],
];

/* Small deterministic patches that give the terrain its grain. */
const rng = (seed: number) => () => {
  seed = (seed * 1664525 + 1013904223) % 4294967296;
  return seed / 4294967296;
};

type Grain = [x: number, y: number, w: number, h: number, n: number, fills: string[]];

const speckle = (seed: number, [x, y, w, h, n, fills]: Grain) => {
  const r = rng(seed);
  return Array.from({ length: n }, () => {
    const cx = x + r() * w;
    const cy = y + r() * h;
    const pts: string[] = [];
    const k = 5 + Math.floor(r() * 3);
    const s = 2 + r() * 6;
    const tilt = r() * 3;
    for (let i = 0; i < k; i++) {
      const a = (i / k) * Math.PI * 2;
      const m = s * (0.4 + r());
      const px = Math.cos(a) * m * 1.5;
      const py = Math.sin(a) * m * 0.6;
      pts.push(
        `${(cx + px * Math.cos(tilt) - py * Math.sin(tilt)).toFixed(1)},${(cy + px * Math.sin(tilt) + py * Math.cos(tilt)).toFixed(1)}`,
      );
    }
    return { pts: pts.join(' '), fill: fills[Math.floor(r() * fills.length)] };
  });
};

const AMERICA_GRAIN: Grain[] = [
  [252, 1046, 150, 60, 110, [C.land, C.dark, C.mid, C.ice]],
  [310, 1085, 80, 90, 60, [C.dark, C.mid, C.dark]],
  [390, 1090, 80, 80, 80, [C.land, C.dark, C.mid]],
  [460, 1110, 130, 60, 90, [C.land, C.mid, C.dark, C.mid]],
  [550, 1180, 180, 70, 60, [C.mid, C.dark, C.dark]],
  [560, 1230, 130, 110, 120, [C.mid, C.dark, C.land]],
  [390, 1200, 120, 140, 60, [C.land, C.tan]],
  [640, 1090, 130, 80, 50, [C.ice, C.mid, C.land]],
  [460, 1340, 90, 90, 50, [C.mid, C.land]],
];

const GRAIN: Grain[] = [
  [1240, 1050, 200, 70, 50, [C.dark, C.mid, C.dark]],
  [1240, 1120, 240, 60, 180, [C.land, C.mid, C.dark, C.mid]],
  [1140, 1140, 180, 110, 120, [C.mid, C.land]],
  [1440, 1050, 130, 110, 130, [C.land, C.mid, C.mid]],
  [1540, 1090, 160, 110, 120, [C.land, C.dark, C.dark]],
  [1680, 1080, 220, 130, 240, [C.land, C.mid, C.dark]],
  [1680, 1050, 220, 50, 80, [C.mid, C.land, C.mid]],
  [1860, 1046, 220, 60, 80, [C.ice, C.land, C.land]],
  [1640, 1290, 150, 110, 170, [C.dark, C.land, C.mid]],
  [1760, 1200, 120, 90, 100, [C.dark, C.land, C.mid]],
  [1370, 1200, 220, 90, 70, [C.tan, C.land]],
  [1360, 1290, 180, 90, 60, [C.tan, C.cream]],
  [1530, 1280, 130, 90, 60, [C.cream, C.tan]],
  [1500, 1360, 120, 110, 80, [C.mid, C.land, C.tan]],
  [1000, 1450, 330, 60, 90, [C.mid, C.land, C.tan]],
  [1140, 1570, 180, 150, 90, [C.mid, C.land]],
  [640, 1470, 180, 60, 20, [C.mid, C.dark]],
  [770, 1530, 120, 150, 100, [C.mid, C.land, C.land]],
  [690, 1640, 110, 150, 70, [C.mid, C.land]],
  [1730, 1600, 210, 60, 50, [C.tan, C.land]],
  [1890, 1640, 80, 120, 60, [C.tan, C.land]],
  [1040, 1050, 60, 60, 20, [C.ice, C.dark]],
  [1120, 1050, 60, 90, 26, [C.land, C.ice]],
];

/* ------------------------------------------------------------------ */
/* Map labels                                                          */
/* ------------------------------------------------------------------ */

const COUNTRIES: [string, number, number][] = [
  ['Canada', 494.5, 1161.5], ['United States', 509, 1287.7], ['Mexico', 503.3, 1394.7],
  ['Canada', 2542.5, 1161.5], ['United States', 2557, 1287.7], ['Mexico', 2551.3, 1394.7],
  ['Sweden', 1182.4, 1050], ['Norway', 1132.7, 1093], ['United', 1063, 1138], ['Kingdom', 1063, 1156],
  ['Poland', 1193, 1178], ['Germany', 1144, 1209], ['Ukraine', 1270.7, 1207], ['France', 1100.7, 1239],
  ['Italy', 1154.6, 1260.7], ['Spain', 1066, 1272.7], ['Turkey', 1290, 1293], ['Algeria', 1095.8, 1367],
  ['Libya', 1185, 1374], ['Egypt', 1256.6, 1366], ['Iraq', 1331, 1335], ['Saudi Arabia', 1344, 1396],
  ['Mali', 1076, 1431], ['Niger', 1143, 1432], ['Chad', 1197, 1454], ['Sudan', 1258.7, 1436],
  ['Nigeria', 1132, 1480], ['Ethiopia', 1311.8, 1485], ['Russia', 1620, 1079], ['Kazakhstan', 1469, 1220],
  ['Mongolia', 1672.7, 1233], ['China', 1675.8, 1305], ['Iran', 1395, 1345], ['Afghanistan', 1472, 1326],
  ['Pakistan', 1476.8, 1362], ['India', 1539.7, 1400], ['Thailand', 1660.8, 1418.4], ['Japan', 1885, 1292],
  ['South Korea', 1808.6, 1313], ['Indonesia', 1746, 1558], ['Papua New', 1925, 1561], ['Guinea', 1924, 1579.5],
  ['Australia', 1851, 1681.8], ['Kenya', 1301.5, 1531], ['DRC', 1216.7, 1543.4], ['Tanzania', 1298, 1570.6],
  ['Angola', 1179, 1606], ['Namibia', 1176.5, 1646], ['Botswana', 1224, 1670.6], ['Madagascar', 1359.6, 1658.6],
  ['South Africa', 1198, 1736], ['Venezuela', 709.7, 1487], ['Colombia', 653.5, 1512], ['Brazil', 768, 1583],
  ['Peru', 651.5, 1597], ['Bolivia', 718, 1631], ['Chile', 686, 1692], ['Argentina', 732, 1775],
  ['New', 2032.8, 1775.7], ['Zealand', 2033, 1794],
];

const OCEANS: [string[], number, number][] = [
  [['North', 'Atlantic', 'Ocean'], 856, 1299.3],
  [['North', 'Pacific', 'Ocean'], 2188, 1287],
  [['South', 'Atlantic', 'Ocean'], 1004, 1681],
  [['Indian', 'Ocean'], 1543, 1651.4],
  [['South', 'Pacific', 'Ocean'], 308, 1685],
  [['South', 'Pacific', 'Ocean'], 2356, 1685],
];

const PINS: [number, number][] = [
  [1254, 1231], [1250, 1233], [1246, 1235], [1290, 1252], [1283, 1255], [1275.7, 1259], [1301.8, 1243], [1250.4, 1261],
];

const Shapes = ({ items, ...rest }: { items: Shape[] } & React.SVGProps<SVGPathElement>) => (
  <>
    {items.map(([s, d], i) => (
      <path key={i} d={d} transform={SHEETS[s]} vectorEffect="non-scaling-stroke" {...rest} />
    ))}
  </>
);

const Grains = ({ items }: { items: Grain[] }) => (
  <>
    {items.flatMap((g, i) =>
      speckle(17 + i * 31, g).map((p, j) => <polygon key={`${i}-${j}`} points={p.pts} fill={p.fill} />),
    )}
  </>
);

function WorldMap() {
  return (
    <svg viewBox="252 1046 2340 908" className="block h-[908px] w-full bg-[#b4d9fe]">
      <defs>
        <clipPath id="america-clip"><Shapes items={AMERICA_LAND} /></clipPath>
        <clipPath id="land-clip"><Shapes items={LAND} /></clipPath>
        <g id="america">
          <Shapes items={AMERICA_LAND} fill={C.land} />
          <g clipPath="url(#america-clip)">
            {AMERICA_ZONES.slice(0, 4).map(([c, s], i) => <Shapes key={i} items={s} fill={c} />)}
            <Grains items={AMERICA_GRAIN} />
            {AMERICA_ZONES.slice(4).map(([c, s], i) => <Shapes key={i} items={s} fill={c} />)}
          </g>
          <Shapes items={AMERICA_SOLID} fill="none" stroke={C.line} strokeWidth={1} />
          <Shapes items={AMERICA_DASH} fill="none" stroke={C.line} strokeWidth={1} strokeDasharray="4 3" />
        </g>
      </defs>

      <use href="#america" />
      <use href="#america" x="2048" />

      <Shapes items={LAND} fill={C.land} />
      <g clipPath="url(#land-clip)">
        {ZONES.slice(0, 4).map(([c, s], i) => <Shapes key={i} items={s} fill={c} />)}
        <Grains items={GRAIN} />
        {ZONES.slice(4).map(([c, s], i) => <Shapes key={i} items={s} fill={c} />)}
        <Shapes items={SOLID} fill="none" stroke={C.line} strokeWidth={1} />
        <Shapes items={DASH} fill="none" stroke={C.line} strokeWidth={1} strokeDasharray="4 3" />
      </g>

      <g fill="none" stroke="#742020" strokeWidth={1}>
        <path d="M254 1528H2592" strokeDasharray="12.5 4.2" />
        <path d="M2157 1046L2109 1095L2053.5 1170.6L2110 1215V1538.5H2224.5V1517.5H2207.5V1496H2246L2287 1595.5H2259.5V1575H2175L2160.5 1590V1614L2152 1622.5V1812.5L2110 1865.5V1954" strokeDasharray="12.5 4.2" />
      </g>

      <g className="font-['Roboto',sans-serif] text-[23px] tracking-[4px]" fill="#5b82c3" textAnchor="middle">
        {OCEANS.map(([lines, x, y], i) =>
          lines.map((t, j) => <text key={`${i}-${j}`} x={x} y={y + j * 26}>{t}</text>),
        )}
      </g>

      <g className="font-['Roboto',sans-serif] text-[18px] font-medium" fill="#222" textAnchor="middle" stroke="#fff" strokeOpacity={0.75} strokeWidth={5} strokeLinejoin="round" paintOrder="stroke">
        {COUNTRIES.map(([t, x, y], i) => <text key={i} x={x} y={y}>{t}</text>)}
      </g>

      {PINS.map(([x, y], i) => (
        <g key={i} transform={`translate(${x} ${y})`}>
          <path d="M-20.500 -5A21 21 0 0 1 20.500 -5" fill="none" stroke="#000" strokeOpacity={0.3} strokeWidth={4} />
          <path d="M0 38.500C-6 22 -20.500 14 -20.500 0A20.500 20.500 0 1 1 20.500 0C20.500 14 6 22 0 38.500Z" fill="#eb5f5a" stroke="#fff" strokeWidth={1.3} />
          <circle r={7.3} fill="#fff" />
        </g>
      ))}

      <g className="font-['Lato',sans-serif] text-[32px]" paintOrder="stroke" strokeLinejoin="round" stroke="#fff" strokeOpacity={0.55} strokeWidth={7}>
        <text x="1313" y="1907" textLength="102" lengthAdjust="spacingAndGlyphs" className="font-bold">
          <tspan fill="#4a80ee">G</tspan><tspan fill="#dc4a3d">o</tspan><tspan fill="#f3b932">o</tspan>
          <tspan fill="#4a80ee">g</tspan><tspan fill="#3fa456">l</tspan><tspan fill="#dc4a3d">e</tspan>
        </text>
        <text x="1421" y="1907" textLength="112" lengthAdjust="spacingAndGlyphs" fill="#71889f">My Maps</text>
      </g>
    </svg>
  );
}

/* ------------------------------------------------------------------ */
/* Page parts                                                          */
/* ------------------------------------------------------------------ */

function Logo({ ink, rule }: { ink: string; rule: string }) {
  return (
    <svg viewBox="0 0 428 100" className="block h-[100px] w-[428px] shrink-0 overflow-visible font-['Lato',sans-serif] font-bold" fill={ink} stroke={ink} strokeWidth={0.9}>
      <text x="1.500" y="43.5" textLength="424" lengthAdjust="spacingAndGlyphs" className="text-[57px]">GLOBAL ENERGY</text>
      <rect x="0" y="52" width="426" height="4" fill={rule} stroke="none" />
      <text x="1 58.500 118 182 230 284.500 342 397" y="96.5" className="text-[44px]">PROJECTS</text>
    </svg>
  );
}

function DottedI() {
  return <span className="font-['Open_Sans',sans-serif] text-[0.98em] leading-none">İ</span>;
}

const SITES: [React.ReactNode, string][] = [
  [<>Global Energy (<DottedI />stanbul)</>, 'Headquarters'],
  ['Balıkesir / Gönen', 'Open Pit Coal Mine'],
  ['Kayseri / Develi', 'Zinc & Lead Underground Mine'],
  ['Adana / Feke', 'Zinc Underground Mine'],
  ['Bursa / Kestel', 'Steam Plant'],
  ['Bursa / Gursu', 'Cogeneration Power Plant'],
  ['Karaman OSB', 'Cogeneration Power Plant'],
  ['Bandırma / Balıkesir', 'Cogeneration Power Plant'],
  ['Sivas / Divriği', 'Open Pit Nickel Mine'],
  ['Mugla / Fethiye', 'Underground Chromite Mine'],
];

function Label({ children }: { children: React.ReactNode }) {
  return <b className="font-bold [-webkit-text-stroke:0.7px_#22242f]">{children}</b>;
}

function MapHeader() {
  return (
    <div className="flex h-[92px] items-center bg-[#546b78] font-['Roboto',sans-serif] text-white">
      <svg viewBox="0 0 42 34" className="ml-[44px] h-[34px] w-[42px]">
        <path fill="#fff" d="M3 0H13V34H3a3 3 0 0 1-3-3V20H4V25L12 17L4 9V15H0V3a3 3 0 0 1 3-3Z" />
        <path fill="none" stroke="#fff" strokeWidth="3.400" d="M15 1.700H37.500a2.500 2.500 0 0 1 2.500 2.500V30a2.500 2.500 0 0 1-2.500 2.500H15" />
        <path stroke="#fff" strokeWidth="1.500" d="M15.700 1V33" />
      </svg>
      <h2 className="ml-[42px] text-[32px] leading-none font-medium [-webkit-text-stroke:0.6px_#fff]">GEP Map</h2>
      <svg viewBox="-16 -17 32 32" className="ml-[15px] size-[32px] overflow-visible">
        <path fill="#71889a" stroke="#455b69" strokeWidth="1" d="M0 -16L3.900 -5.200H15.500L6.300 1.600L9.700 13L0 6.200L-9.700 13L-6.300 1.600L-15.500 -5.200H-3.900Z" />
      </svg>
      <svg viewBox="0 0 32 32" className="ml-auto h-[32px] w-[32px]" fill="#fff">
        <path d="M26 6L6 16L26 26" fill="none" stroke="#dfe5e9" strokeWidth="3" />
        <circle cx="26" cy="6" r="5.300" /><circle cx="6" cy="16" r="5.300" /><circle cx="26" cy="26" r="5.300" />
      </svg>
      <svg viewBox="0 0 40 30" className="mr-[45px] ml-[60px] h-[30px] w-[40px]" fill="none" stroke="#fff" strokeWidth="4">
        <path d="M2 10V2H11M29 2H38V10M38 20V28H29M11 28H2V20" />
      </svg>
    </div>
  );
}

function MapPanel() {
  return (
    <section className="mt-[112px] w-[2340px]">
      <MapHeader />
      <div className="relative">
        <WorldMap />
        <div className="absolute top-[742px] left-[32px] flex h-[118px] w-[58px] flex-col rounded-[3px] bg-white shadow-[0_3px_8px_rgba(0,0,0,0.35)]">
          <button className="flex flex-1 items-center justify-center border-b-2 border-[#dcdcdc]">
            <svg viewBox="0 0 22 22" className="size-[22px]"><path stroke="#999" strokeWidth="6" d="M11 0V22M0 11H22" /></svg>
          </button>
          <button className="flex flex-1 items-center justify-center">
            <svg viewBox="0 0 22 6" className="h-[6px] w-[22px]"><path stroke="#999" strokeWidth="6" d="M0 3H22" /></svg>
          </button>
        </div>
        <div className="absolute top-[880px] left-[4px] flex h-[24px] w-[506px] items-center bg-white/85 pt-[2px] pl-[12px] font-['Roboto',sans-serif] text-[20px] leading-none whitespace-nowrap text-[#707070]">
          <span className="w-[174px]">Map data ©2020</span>
          <span className="w-[80px] text-[#4f80ea]">Terms</span>
          <span className="w-[93px]">1,000 km</span>
          <span className="h-[12px] w-[133px] border-x-2 border-b-2 border-[#777]" />
        </div>
      </div>
    </section>
  );
}

export default function App() {
  return (
    <div className={`flex h-[2370px] w-[2832px] flex-col overflow-hidden bg-white ${SANS}`}>
      <div className="h-[6px] shrink-0 border-b-2 border-black bg-[#111]" />
      <div className="flex min-h-0 flex-1">
        <div className="flex w-[6px] shrink-0 flex-col border-r border-black bg-[#17120f]">
          <div className="h-[1972px] bg-gradient-to-b from-[#1a1410] via-[#15110f] to-[#2b2624]" />
          <div className="h-[53px] bg-gradient-to-b from-[#a3a3a3] to-[#777]" />
          <div className="h-[34px] bg-[#5d5138]" />
          <div className="h-[8px] bg-[#a5a5a2]" />
          <div className="flex-1 bg-gradient-to-b from-[#85857f] to-[#6b6860]" />
        </div>

        <div className="flex min-w-0 flex-1 flex-col">
          <header className="relative z-10 flex h-[156px] shrink-0 bg-white pt-[29px] pl-[31px]">
            <Logo ink="#434343" rule="#efc75e" />
            <nav className="ml-[560px] flex h-[100px] gap-[90px] pt-[29px] text-[28.600px] leading-[40px] whitespace-nowrap text-[#17181c]">
              <a>ABOUT US</a>
              <a>EXECUTIVE TEAM</a>
              <a>OPERATIONS</a>
              <a>LOCATIONS</a>
              <a>CONTACT US</a>
            </nav>
          </header>

          <main className="-mt-[26px] flex-1 pl-[246px]">
            <div className="grid w-[2338px] grid-cols-4 gap-x-[78.600px] gap-y-[100px] text-[32.200px] leading-[44px] text-[#22242f]">
              {SITES.map(([name, type], i) => (
                <article key={i}>
                  <p className="-ml-px h-[44px] whitespace-nowrap"><Label>Name:</Label> {name}</p>
                  <hr className="mt-[32px] mb-[28px] h-[6px] border-0 bg-[#c1973f]" />
                  <p className="-ml-px"><Label>Type:</Label> {type}</p>
                </article>
              ))}
            </div>
            <MapPanel />
          </main>

          <div className="h-[40px] shrink-0 bg-[#2e323d]" />
          <footer className="flex h-[200px] shrink-0 border-b-4 border-black bg-[#22242f] pl-[246px] text-[28.650px] leading-[48px] whitespace-nowrap text-[#a6a6a6]">
            <div className="pt-[49px]"><Logo ink="#ffffff" rule="#dfb551" /></div>
            <svg viewBox="0 0 28 36" className="mt-[89px] ml-[339px] h-[36px] w-[28px]" fill="none" stroke="#b8892f" strokeWidth="2">
              <path d="M14 35C11 27 1.500 20 1.500 12.500A12.500 11.500 0 0 1 26.500 12.500C26.500 20 17 27 14 35Z" />
              <circle cx="14" cy="13.500" r="4" fill="#b8892f" stroke="none" />
            </svg>
            <address className="mt-[60px] ml-[19px] w-[871px] not-italic">
              Levazim Mahallesi Koru Sokak No:2 Zorlu Center Teras Evler
              <br />
              kat:T0 No:56/57 Beşiktaş/<DottedI />stanbul
            </address>
            <svg viewBox="0 0 34 42" className="mt-[87px] h-[42px] w-[34px]" fill="none" stroke="#b8892f" strokeWidth="2" strokeLinejoin="round">
              <path d="M7 1.500C3 3 1 8 2 14C4 24 12 35 22 39.500C27 41.500 32 38.500 32.500 34.500C32.500 33 31 31 26 28C24 27 22.500 28 21.500 30C18.500 29 12 21 11 16.500C13 15.500 14.500 14 13.500 12C11.500 7 9.500 1 7 1.500Z" />
            </svg>
            <span className="mt-[84px] ml-[19px] w-[312px]">+90 212 274 11 14</span>
            <svg viewBox="0 0 38 36" className="mt-[91px] h-[36px] w-[38px]" fill="none" stroke="#b8892f" strokeWidth="2">
              <path d="M7 13V2H31V13M4 13H34A3 3 0 0 1 37 16V27A3 3 0 0 1 34 30H4A3 3 0 0 1 1 27V16A3 3 0 0 1 4 13ZM12 6H26M12 10H26M7 30V19.500H31V30M7 30V34.500H31V30" />
            </svg>
            <span className="mt-[84px] ml-[19px]">+90 212 274 11 24</span>
          </footer>
        </div>
      </div>
    </div>
  );
}
